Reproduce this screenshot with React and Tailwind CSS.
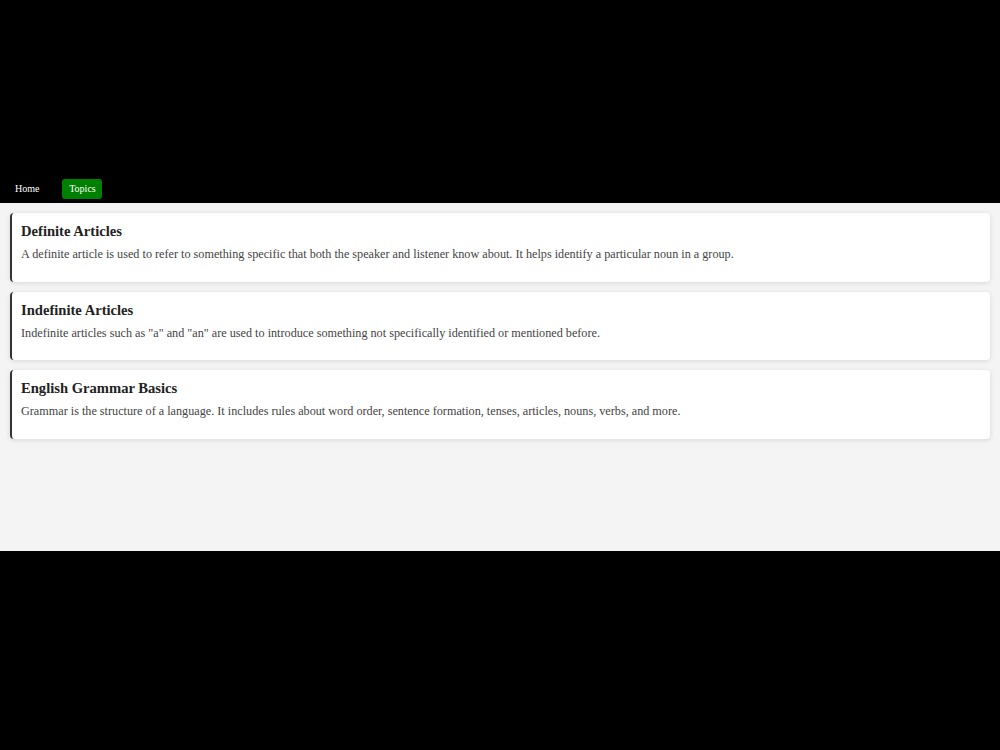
import React from "react";

const topics = [
  {
    title: "Definite Articles",
    body: "A definite article is used to refer to something specific that both the speaker and listener know about. It helps identify a particular noun in a group.",
  },
  {
    title: "Indefinite Articles",
    body: 'Indefinite articles such as "a" and "an" are used to introduce something not specifically identified or mentioned before.',
  },
  {
    title: "English Grammar Basics",
    body: "Grammar is the structure of a language. It includes rules about word order, sentence formation, tenses, articles, nouns, verbs, and more.",
  },
];

export default function App() {
  return (
    <div
      className="w-[1000px] h-[750px] bg-black flex flex-col"
      style={{ fontFamily: '"Liberation Serif", "Times New Roman", serif' }}
    >
      <div className="h-[175px] shrink-0 bg-black" />
      <nav className="h-[28px] shrink-0 bg-black flex items-center pl-[6px] gap-[14px]">
        <a className="px-[9px] py-[4px] text-white text-[10px] leading-[12px] cursor-pointer">Home</a>
        <a className="px-[7px] h-[20px] w-[40px] flex items-center justify-center bg-[#008000] rounded-[3px] text-white text-[10px] leading-[12px] cursor-pointer">
          Topics
        </a>
      </nav>
      <main className="h-[348px] shrink-0 bg-[#f4f4f4] px-[10px] pt-[10px] flex flex-col gap-[10px]">
        {topics.map((t) => (
          <section
            key={t.title}
            className="bg-white border-l-2 border-[#333] rounded-[4px] shadow-[0_1px_5px_rgba(0,0,0,0.12)] pt-[10px] pb-[10px] pl-[9px] pr-[11px] h-[68.5px] shrink-0"
          >
            <h3 className="text-[14.6px] leading-[17px] font-bold text-[#222]">{t.title}</h3>
            <p className="mt-[7px] text-[12.2px] leading-[15px] text-[#444]">{t.body}</p>
          </section>
        ))}
      </main>
      <div className="flex-1 bg-black" />
    </div>
  );
}
